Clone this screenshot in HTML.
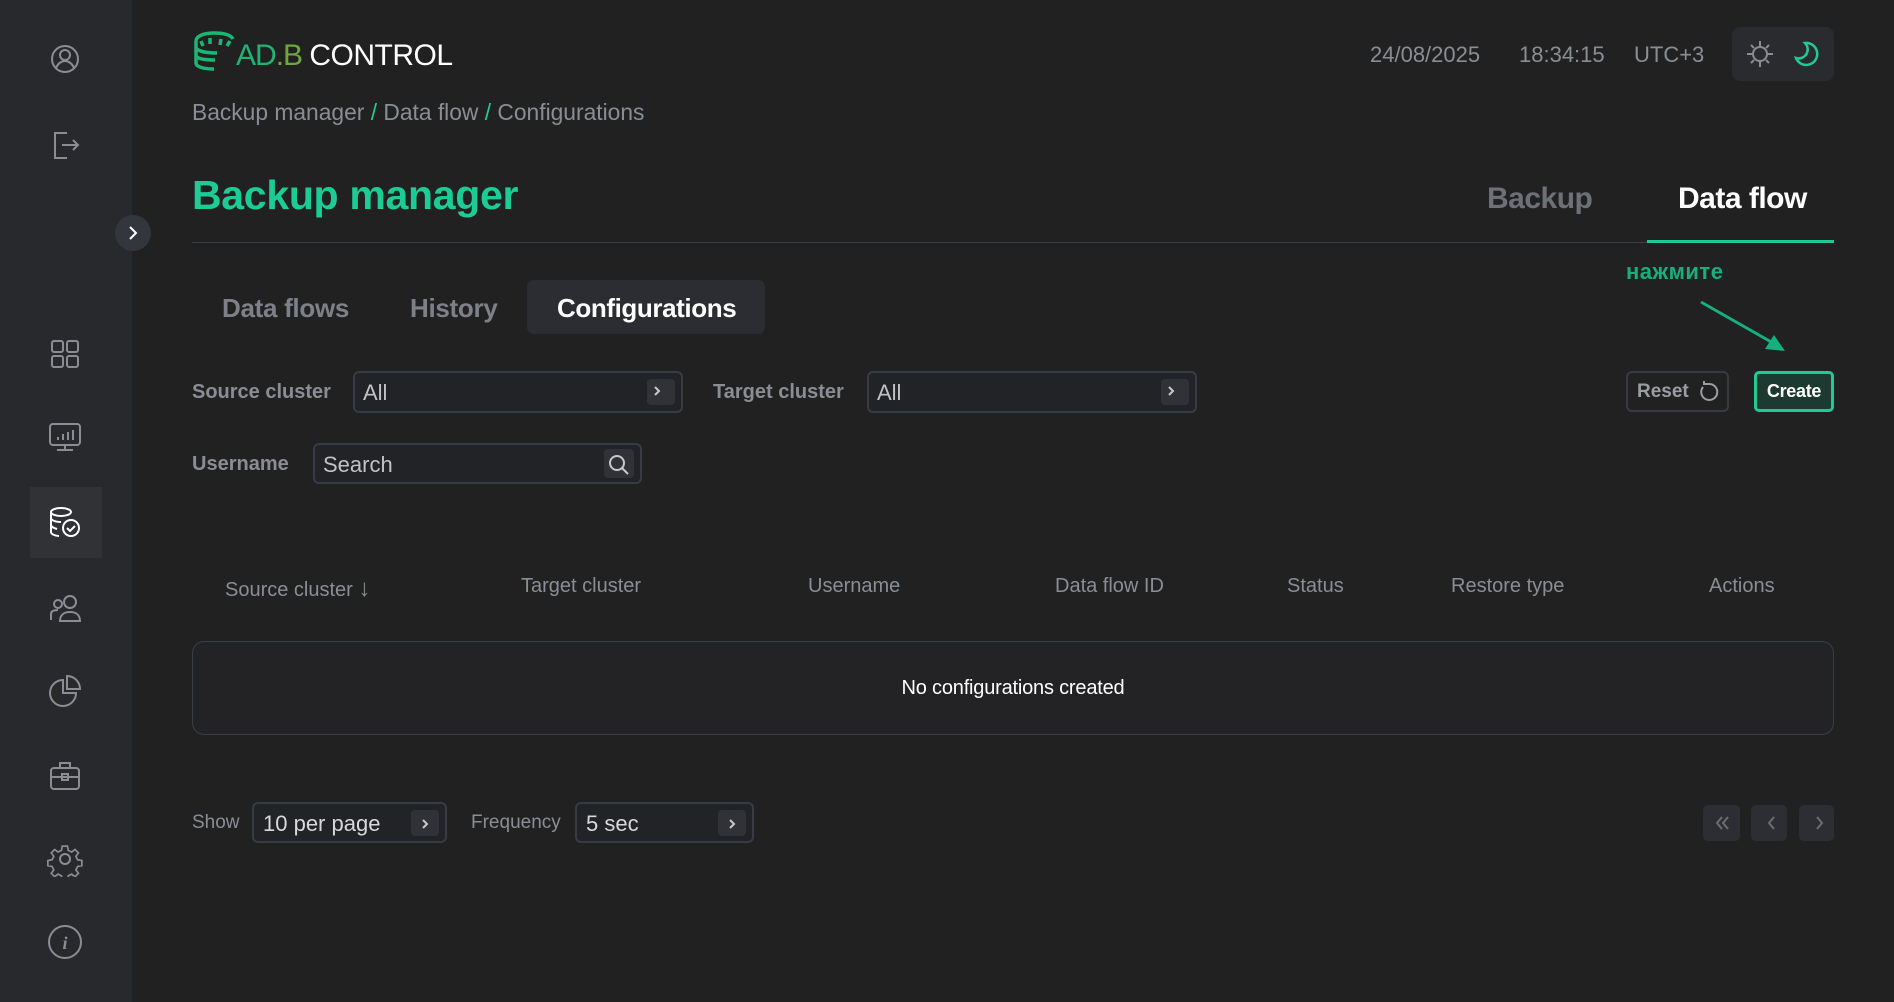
<!DOCTYPE html>
<html><head><meta charset="utf-8"><style>
*{box-sizing:border-box;margin:0;padding:0}
body{width:1894px;height:1002px;background:#212121;font-family:"Liberation Sans",sans-serif;position:relative;overflow:hidden;color:#fff}
.a{position:absolute;white-space:nowrap}
.side{left:0;top:0;width:132px;height:1002px;background:#27292d}
.ic{position:absolute;left:47px;width:36px;height:36px}
.g{color:#8a8e94}
.box{position:absolute;border:2px solid #363c45;border-radius:6px;background:#222326}
.chev{position:absolute;right:6px;top:6px;width:28px;height:26px;background:#303238;border-radius:4px}
.lbl{font-size:20px;color:#8a8e94;font-weight:bold}
.th{font-size:20px;color:#8a8e94;top:575px}
</style></head><body>
<div class="a side"></div>
<svg class="ic" style="top:41px" viewBox="0 0 36 36" fill="none" stroke="#8a8e94" stroke-width="2"><circle cx="18" cy="18" r="13"/><circle cx="18" cy="14" r="5"/><path d="M9 27c2-5 6-7 9-7s7 2 9 7"/></svg>
<svg class="ic" style="top:127px" viewBox="0 0 36 36" fill="none" stroke="#8a8e94" stroke-width="2"><path d="M20 6H8v25h12M15 18h16M26 13l5 5-5 5"/></svg>
<div class="a" style="left:115px;top:215px;width:36px;height:36px;border-radius:18px;background:#33363c"></div>
<svg class="a" style="left:125px;top:224px" width="16" height="18" viewBox="0 0 16 18" fill="none" stroke="#fff" stroke-width="2"><path d="M5 3l6 6-6 6"/></svg>
<svg class="ic" style="top:336px" viewBox="0 0 36 36" fill="none" stroke="#8a8e94" stroke-width="2"><rect x="5" y="5" width="11" height="11" rx="2"/><rect x="20" y="5" width="11" height="11" rx="2"/><rect x="5" y="20" width="11" height="11" rx="2"/><rect x="20" y="20" width="11" height="11" rx="2"/></svg>
<svg class="ic" style="top:419px" viewBox="0 0 36 36" fill="none" stroke="#8a8e94" stroke-width="2"><rect x="3" y="5" width="30" height="21" rx="3"/><path d="M10 31h16M18 26v5M11 21v-3M16 21v-6M21 21v-8M26 21v-10"/></svg>
<div class="a" style="left:30px;top:487px;width:72px;height:71px;background:#303236"></div>
<svg class="ic" style="top:504px" viewBox="0 0 36 36" fill="none" stroke="#fff" stroke-width="2"><ellipse cx="14" cy="8" rx="10" ry="4"/><path d="M4 8v20c0 2 4 4 8 4M4 14c0 2 4 4 10 4M4 21c0 2 3 3 6 4"/><circle cx="24" cy="24" r="8"/><path d="M20 24l3 3 5-5"/></svg>
<svg class="ic" style="top:591px" viewBox="0 0 36 36" fill="none" stroke="#8a8e94" stroke-width="2"><circle cx="11" cy="13" r="4"/><circle cx="23" cy="11" r="6"/><path d="M4 29v-6c0-3 3-4 7-4M13 30c0-6 4-9 10-9s10 3 10 9z"/></svg>
<svg class="ic" style="top:673px" viewBox="0 0 36 36" fill="none" stroke="#8a8e94" stroke-width="2"><path d="M16 7a13 13 0 1 0 13 13H16z"/><path d="M20 3v13h13A13 13 0 0 0 20 3z"/></svg>
<svg class="ic" style="top:758px" viewBox="0 0 36 36" fill="none" stroke="#8a8e94" stroke-width="2"><rect x="4" y="10" width="28" height="21" rx="3"/><path d="M13 10V5h10v5M4 19h28"/><rect x="15" y="16" width="6" height="6"/></svg>
<svg class="ic" style="top:841px" viewBox="0 0 36 36" fill="none" stroke="#8a8e94" stroke-width="2"><path d="M15 3h6l1 5 4 2 4-3 4 4-3 4 2 4 5 1v6l-5 1-2 4 3 4-4 4-4-3-4 2-1 5h-6l-1-5-4-2-4 3-4-4 3-4-2-4-5-1v-6l5-1 2-4-3-4 4-4 4 3 4-2z" transform="scale(.85) translate(3 3)"/><circle cx="18" cy="18" r="5"/></svg>
<svg class="ic" style="top:924px" viewBox="0 0 36 36" fill="none" stroke="#8a8e94" stroke-width="2"><circle cx="18" cy="18" r="16"/><text x="18" y="25" font-size="18" font-style="italic" font-weight="bold" fill="#8a8e94" stroke="none" text-anchor="middle" font-family="Liberation Serif">i</text></svg>

<svg class="a" style="left:192px;top:31px" width="46" height="40" viewBox="0 0 46 40" fill="none" stroke="#1db574" stroke-width="3.5"><path d="M4 10c0-5 8-8 18-8s17 2 19 6M4 10v22c0 4 8 6 18 6M4 17c2 3 9 5 21 5M4 25c2 3 9 4 19 4M9 10l2 5M18 7v6M29 8l-1 6M38 10l-3 5"/></svg>
<div class="a" style="left:236px;top:39px;font-size:30px;letter-spacing:-1px"><span style="color:#1db574">AD</span><span style="color:#6fa83a">.B</span> <span style="color:#fff;letter-spacing:-0.5px">CONTROL</span></div>

<div class="a g" style="left:1370px;top:42px;font-size:22px">24/08/2025</div>
<div class="a g" style="left:1519px;top:42px;font-size:22px">18:34:15</div>
<div class="a g" style="left:1634px;top:42px;font-size:22px">UTC+3</div>
<div class="a" style="left:1732px;top:27px;width:102px;height:54px;border-radius:8px;background:#2a2b2f"></div>
<svg class="a" style="left:1744px;top:38px" width="32" height="32" viewBox="0 0 32 32" fill="none" stroke="#8a8e94" stroke-width="2"><circle cx="16" cy="16" r="7"/><path d="M16 3v5M16 24v5M3 16h5M24 16h5M7 7l3 3M22 22l3 3M7 25l3-3M22 10l3-3"/></svg>
<svg class="a" style="left:1791px;top:38px" width="32" height="32" viewBox="0 0 32 32" fill="none" stroke="#1ccc95" stroke-width="2.5"><path d="M14 5a11 11 0 1 1-9 15 9 9 0 0 0 9-15z"/></svg>

<div class="a g" style="left:192px;top:99px;font-size:22.8px">Backup manager <span style="color:#1ccc95">/</span> Data flow <span style="color:#1ccc95">/</span> Configurations</div>
<div class="a" style="left:192px;top:172px;font-size:41px;font-weight:bold;color:#1ccc95;letter-spacing:-0.3px">Backup manager</div>
<div class="a" style="left:1487px;top:182px;font-size:30px;font-weight:bold;color:#6d7177;letter-spacing:-0.5px">Backup</div>
<div class="a" style="left:1678px;top:182px;font-size:30px;font-weight:bold;color:#fff;letter-spacing:-0.5px">Data flow</div>
<div class="a" style="left:192px;top:242px;width:1642px;height:1px;background:#3a3e45"></div>
<div class="a" style="left:1647px;top:240px;width:187px;height:3px;background:#1ccc95"></div>

<div class="a" style="left:222px;top:293px;font-size:26px;font-weight:bold;color:#7d8187;letter-spacing:-0.3px">Data flows</div>
<div class="a" style="left:410px;top:293px;font-size:26px;font-weight:bold;color:#7d8187;letter-spacing:-0.3px">History</div>
<div class="a" style="left:527px;top:280px;width:238px;height:54px;border-radius:7px;background:#2c2d32"></div>
<div class="a" style="left:557px;top:293px;font-size:26px;font-weight:bold;color:#fff;letter-spacing:-0.4px">Configurations</div>

<div class="a" style="left:1626px;top:259px;font-size:22px;font-weight:bold;color:#16b07f;letter-spacing:0.5px">нажмите</div>
<svg class="a" style="left:1695px;top:295px" width="100" height="64" viewBox="0 0 100 64"><path d="M6 7L78 48" stroke="#16b07f" stroke-width="3"/><path d="M90 56L70 54 79 40z" fill="#16b07f"/></svg>

<div class="a lbl" style="left:192px;top:381px">Source cluster</div>
<div class="box" style="left:353px;top:371px;width:330px;height:42px"><span class="a" style="left:8px;top:7px;font-size:22px;color:#bfc2c6">All</span><div class="chev"></div></div>
<div class="a lbl" style="left:713px;top:381px">Target cluster</div>
<div class="box" style="left:867px;top:371px;width:330px;height:42px"><span class="a" style="left:8px;top:7px;font-size:22px;color:#bfc2c6">All</span><div class="chev"></div></div>
<svg class="a" style="left:650px;top:383px" width="14" height="16"><path d="M5 4l4 4-4 4" stroke="#c6c8cc" stroke-width="2" fill="none"/></svg>
<svg class="a" style="left:1164px;top:383px" width="14" height="16"><path d="M5 4l4 4-4 4" stroke="#c6c8cc" stroke-width="2" fill="none"/></svg>

<div class="box" style="left:1626px;top:371px;width:103px;height:41px;background:#212121"><span class="a" style="left:9px;top:8px;font-size:19px;font-weight:bold;color:#9a9ea4">Reset</span>
<svg class="a" style="left:70px;top:8px" width="22" height="22" viewBox="0 0 22 22" fill="none" stroke="#9a9ea4" stroke-width="2"><path d="M5 6a8 8 0 1 0 6-3H6M6 0v4"/></svg></div>
<div class="a" style="left:1754px;top:371px;width:80px;height:41px;border:3px solid #1ccc95;border-radius:5px;background:#1d3a31;display:flex;align-items:center;justify-content:center;font-size:18px;font-weight:bold;color:#fff;letter-spacing:-0.3px">Create</div>

<div class="a lbl" style="left:192px;top:453px">Username</div>
<div class="box" style="left:313px;top:443px;width:329px;height:41px"><span class="a" style="left:8px;top:7px;font-size:22px;color:#bfc2c6">Search</span><div class="chev" style="width:30px;height:29px;top:4px"></div>
<svg class="a" style="left:292px;top:8px" width="24" height="24" viewBox="0 0 24 24" fill="none" stroke="#c6c8cc" stroke-width="2"><circle cx="10" cy="10" r="7"/><path d="M15 15l6 6"/></svg></div>

<div class="a th" style="left:225px">Source cluster <span style="font-size:24px">↓</span></div>
<div class="a th" style="left:521px">Target cluster</div>
<div class="a th" style="left:808px">Username</div>
<div class="a th" style="left:1055px">Data flow ID</div>
<div class="a th" style="left:1287px">Status</div>
<div class="a th" style="left:1451px">Restore type</div>
<div class="a th" style="left:1709px">Actions</div>

<div class="a" style="left:192px;top:641px;width:1642px;height:94px;border:1px solid #393e46;border-radius:12px;background:#232326"></div>
<div class="a" style="left:0;width:2026px;text-align:center;top:677px;font-size:20px;color:#fff;letter-spacing:-0.2px">No configurations created</div>

<div class="a lbl" style="left:192px;top:812px;font-weight:normal;font-size:19px">Show</div>
<div class="box" style="left:252px;top:802px;width:195px;height:41px"><span class="a" style="left:9px;top:7px;font-size:22px;color:#d6d8db">10 per page</span><div class="chev"></div>
<svg class="a" style="left:164px;top:12px" width="14" height="16"><path d="M5 4l4 4-4 4" stroke="#c6c8cc" stroke-width="2" fill="none"/></svg></div>
<div class="a lbl" style="left:471px;top:812px;font-weight:normal;font-size:19px">Frequency</div>
<div class="box" style="left:575px;top:802px;width:179px;height:41px"><span class="a" style="left:9px;top:7px;font-size:22px;color:#d6d8db">5 sec</span><div class="chev"></div>
<svg class="a" style="left:148px;top:12px" width="14" height="16"><path d="M5 4l4 4-4 4" stroke="#c6c8cc" stroke-width="2" fill="none"/></svg></div>

<div class="a" style="left:1703px;top:805px;width:37px;height:36px;border-radius:5px;background:#2c2e33"></div>
<div class="a" style="left:1751px;top:805px;width:36px;height:36px;border-radius:5px;background:#2c2e33"></div>
<div class="a" style="left:1799px;top:805px;width:35px;height:36px;border-radius:5px;background:#2c2e33"></div>
<svg class="a" style="left:1703px;top:805px" width="131" height="36" fill="none" stroke="#6a6e74" stroke-width="2"><path d="M19 12l-5 6 5 6M25 12l-5 6 5 6M71 12l-5 6 5 6M114 12l5 6-5 6"/></svg>
</body></html>
